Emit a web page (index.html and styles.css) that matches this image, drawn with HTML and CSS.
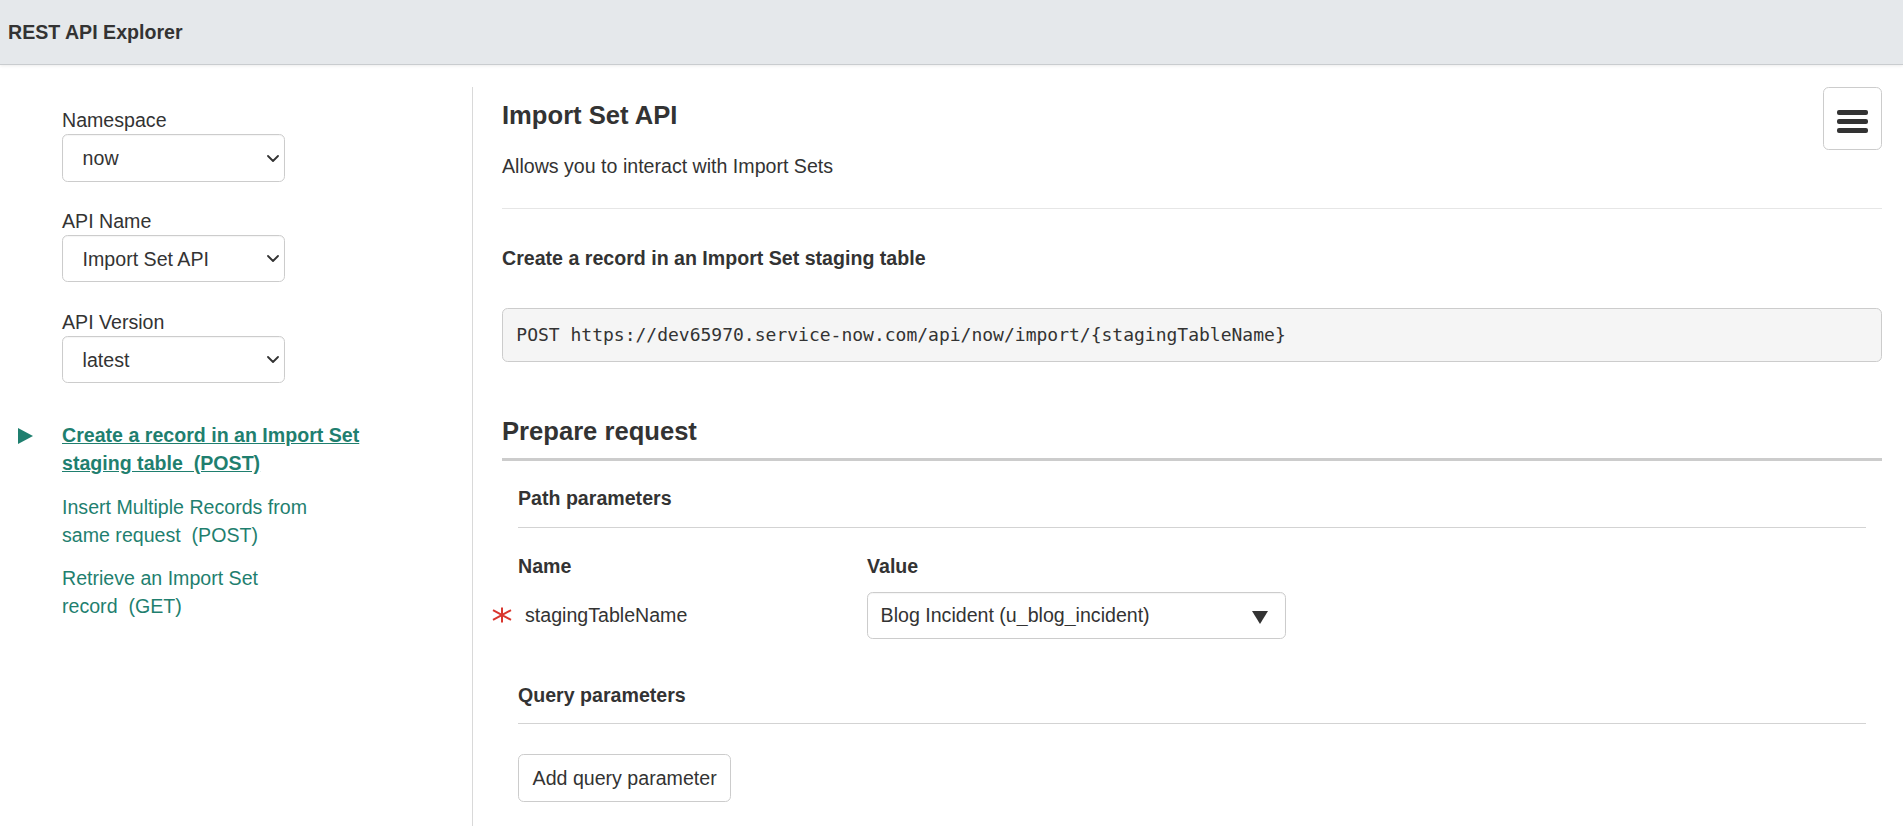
FILE: index.html
```html
<!DOCTYPE html>
<html lang="en">
<head>
<meta charset="utf-8">
<title>REST API Explorer</title>
<link rel="stylesheet" href="styles.css">
</head>
<body>
<header class="topbar">
  <h1 class="topbar-title">REST API Explorer</h1>
</header>
<div class="layout">
  <aside class="sidebar">
    <div class="field">
      <label class="field-label">Namespace</label>
      <div class="select-wrap">
        <select class="select"><option>now</option></select>
        <svg class="chevron" viewBox="0 0 12 7" width="12" height="7"><path d="M1 1l5 5 5-5"/></svg>
      </div>
    </div>
    <div class="field">
      <label class="field-label">API Name</label>
      <div class="select-wrap">
        <select class="select"><option>Import Set API</option></select>
        <svg class="chevron" viewBox="0 0 12 7" width="12" height="7"><path d="M1 1l5 5 5-5"/></svg>
      </div>
    </div>
    <div class="field field-last">
      <label class="field-label">API Version</label>
      <div class="select-wrap">
        <select class="select"><option>latest</option></select>
        <svg class="chevron" viewBox="0 0 12 7" width="12" height="7"><path d="M1 1l5 5 5-5"/></svg>
      </div>
    </div>
    <ul class="endpoints">
      <li class="endpoint">
        <svg class="marker" viewBox="0 0 15 16" width="15" height="16"><polygon points="0,0 15,8 0,16"/></svg>
        <a class="endpoint-link active" href="#">Create a record in an Import Set<br>staging table&nbsp;&nbsp;(POST)</a>
      </li>
      <li class="endpoint">
        <span class="marker-space"></span>
        <a class="endpoint-link" href="#">Insert Multiple Records from<br>same request&nbsp;&nbsp;(POST)</a>
      </li>
      <li class="endpoint">
        <span class="marker-space"></span>
        <a class="endpoint-link" href="#">Retrieve an Import Set<br>record&nbsp;&nbsp;(GET)</a>
      </li>
    </ul>
  </aside>
  <main class="main">
    <button class="menu-btn" type="button" aria-label="Menu"><span></span><span></span><span></span></button>
    <h2 class="api-title">Import Set API</h2>
    <p class="api-desc">Allows you to interact with Import Sets</p>
    <hr class="divider">
    <h3 class="method-title">Create a record in an Import Set staging table</h3>
    <pre class="endpoint-url">POST https://dev65970.service-now.com/api/now/import/{stagingTableName}</pre>
    <h2 class="section-title">Prepare request</h2>
    <div class="params">
      <h4 class="params-title">Path parameters</h4>
      <div class="param-grid">
        <div class="col-head">Name</div>
        <div class="col-head">Value</div>
        <div class="param-name">
          <svg class="required" viewBox="0 0 20 16" width="20" height="16"><path d="M10 0.5V15.5M1 3.2L19 12.8M1 12.8L19 3.2"/></svg>
          <span>stagingTableName</span>
        </div>
        <div class="select-wrap select-wide">
          <select class="select"><option>Blog Incident (u_blog_incident)</option></select>
          <svg class="caret" viewBox="0 0 16 13" width="16" height="13"><polygon points="0,0 16,0 8,13"/></svg>
        </div>
      </div>
      <h4 class="params-title params-title-query">Query parameters</h4>
      <button class="btn" type="button">Add query parameter</button>
    </div>
  </main>
</div>
</body>
</html>
```

FILE: styles.css
```css
* {
  box-sizing: border-box;
}

html,
body {
  margin: 0;
}

body {
  font-family: "Liberation Sans", Arial, Helvetica, sans-serif;
  font-size: 19.6px;
  line-height: 28px;
  color: #333;
  background: #fff;
}

/* Top bar */
.topbar {
  height: 65px;
  background: #e5e8eb;
  border-bottom: 1px solid #c9cccf;
  box-shadow: 0 1px 3px rgba(0, 0, 0, 0.08);
  display: flex;
  align-items: center;
  padding-left: 8px;
}

.topbar-title {
  margin: 0;
  font-size: 19.6px;
  line-height: 28px;
  font-weight: bold;
  color: #333;
}

/* Layout */
.layout {
  display: flex;
  padding-top: 22px;
  min-height: calc(100vh - 65px);
}

.sidebar {
  width: 473px;
  flex: 0 0 473px;
  border-right: 1px solid #d9d9d9;
  padding: 19px 0 0 18px;
}

.field {
  margin-left: 44px;
  margin-bottom: 25.3px;
}

.field-last {
  margin-bottom: 0;
}

.field-label {
  display: block;
  font-weight: normal;
}

.select-wrap {
  position: relative;
  width: 223px;
}

.select {
  display: block;
  width: 100%;
  height: 47.6px;
  -webkit-appearance: none;
  appearance: none;
  background: #fff;
  border: 1.4px solid #ccc;
  border-radius: 5.6px;
  box-shadow: inset 0 1px 1px rgba(0, 0, 0, 0.04);
  padding: 0 40px 0 19.6px;
  font-family: inherit;
  font-size: 19.6px;
  color: #333;
  outline: none;
}

.chevron {
  position: absolute;
  right: 6px;
  top: 20.5px;
  fill: none;
  stroke: #333;
  stroke-width: 1.8;
  stroke-linecap: round;
  stroke-linejoin: round;
  pointer-events: none;
}

/* Endpoints */
.endpoints {
  list-style: none;
  margin: 38px 0 0;
  padding: 0;
  display: flex;
  flex-direction: column;
  gap: 15.5px;
}

.endpoint {
  display: grid;
  grid-template-columns: 44px auto;
  align-items: start;
}

.marker {
  margin-top: 7px;
  fill: #1f7f6f;
}

.endpoint-link {
  color: #1f7f6f;
  text-decoration: none;
  white-space: nowrap;
}

.endpoint-link.active {
  font-weight: bold;
  text-decoration: underline;
}

/* Main */
.main {
  flex: 1;
  position: relative;
  padding: 0 21px 0 29px;
}

.menu-btn {
  position: absolute;
  top: 0;
  right: 21px;
  width: 59px;
  height: 63px;
  background: #fff;
  border: 1.4px solid #ccc;
  border-radius: 5.6px;
  padding: 6px 0 0;
  display: flex;
  flex-direction: column;
  align-items: center;
  justify-content: center;
  gap: 4.8px;
}

.menu-btn span {
  display: block;
  width: 31px;
  height: 4.2px;
  border-radius: 2px;
  background: #333;
}

.api-title {
  margin: 14px 0 0;
  font-size: 25.6px;
  line-height: 28px;
  font-weight: bold;
}

.api-desc {
  margin: 23px 0 0;
}

.divider {
  margin: 28px 0 0;
  border: 0;
  border-top: 1px solid #e6e6e6;
  height: 0;
}

.method-title {
  margin: 35px 0 0;
  font-size: 19.6px;
  line-height: 28px;
  font-weight: bold;
}

.endpoint-url {
  margin: 36px 0 0;
  padding: 13px 13.3px;
  background: #f5f5f5;
  border: 1.4px solid #ccc;
  border-radius: 5.6px;
  font-family: "DejaVu Sans Mono", "Liberation Mono", monospace;
  font-size: 18px;
  line-height: 26px;
  color: #333;
}

.section-title {
  margin: 55px 0 0;
  padding-bottom: 13px;
  border-bottom: 3px solid #ccc;
  font-size: 25.6px;
  line-height: 28px;
  font-weight: bold;
}

.params {
  padding: 0 16px;
}

.params-title {
  margin: 22.5px 0 0;
  padding-bottom: 15px;
  border-bottom: 1px solid #d3d3d3;
  font-size: 19.6px;
  line-height: 28px;
  font-weight: bold;
}

.params-title-query {
  margin-top: 42px;
  padding-bottom: 14px;
}

.param-grid {
  margin-top: 24px;
  display: grid;
  grid-template-columns: 349px 419px;
  row-gap: 12px;
  align-items: center;
}

.col-head {
  font-weight: bold;
}

.param-name {
  display: flex;
  align-items: center;
  margin-left: -26px;
}

.required {
  flex: 0 0 20px;
  margin-right: 13px;
  fill: none;
  stroke: #d9362e;
  stroke-width: 2;
}

.select-wide {
  width: 419px;
}

.select-wide .select {
  padding-left: 12.6px;
}

.caret {
  position: absolute;
  right: 18px;
  top: 19px;
  fill: #333;
  pointer-events: none;
}

.btn {
  display: block;
  margin-top: 30px;
  height: 47.6px;
  padding: 0 13.6px;
  background: #fff;
  border: 1.4px solid #ccc;
  border-radius: 5.6px;
  font-family: inherit;
  font-size: 19.6px;
  line-height: 28px;
  color: #333;
}
```
